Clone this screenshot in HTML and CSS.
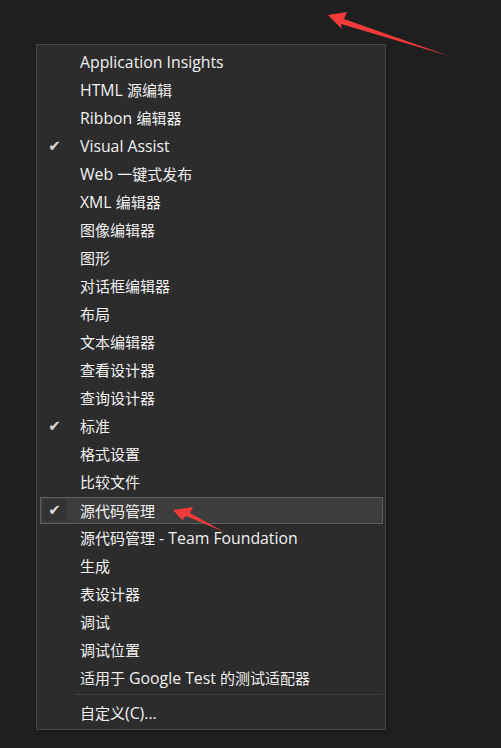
FILE: index.html
```html
<!DOCTYPE html>
<html lang="zh-CN">
<head>
<meta charset="utf-8">
<link rel="stylesheet" href="styles.css">
</head>
<body>
<div class="menu">
  <div class="item"><span class="label"><span class="en">Application Insights</span></span></div>
  <div class="item"><span class="label"><span class="en">HTML </span>源编辑</span></div>
  <div class="item"><span class="label"><span class="en">Ribbon </span>编辑器</span></div>
  <div class="item checked"><span class="check">✔</span><span class="label"><span class="en">Visual Assist</span></span></div>
  <div class="item"><span class="label"><span class="en">Web </span>一键式发布</span></div>
  <div class="item"><span class="label"><span class="en">XML </span>编辑器</span></div>
  <div class="item"><span class="label">图像编辑器</span></div>
  <div class="item"><span class="label">图形</span></div>
  <div class="item"><span class="label">对话框编辑器</span></div>
  <div class="item"><span class="label">布局</span></div>
  <div class="item"><span class="label">文本编辑器</span></div>
  <div class="item"><span class="label">查看设计器</span></div>
  <div class="item"><span class="label">查询设计器</span></div>
  <div class="item checked"><span class="check">✔</span><span class="label">标准</span></div>
  <div class="item"><span class="label">格式设置</span></div>
  <div class="item"><span class="label">比较文件</span></div>
  <div class="item checked hover"><span class="check">✔</span><span class="label">源代码管理</span></div>
  <div class="item"><span class="label">源代码管理<span class="en"> - Team Foundation</span></span></div>
  <div class="item"><span class="label">生成</span></div>
  <div class="item"><span class="label">表设计器</span></div>
  <div class="item"><span class="label">调试</span></div>
  <div class="item"><span class="label">调试位置</span></div>
  <div class="item"><span class="label">适用于<span class="en"> Google Test </span>的测试适配器</span></div>
  <div class="sep"></div>
  <div class="item"><span class="label">自定义<span class="en">(C)...</span></span></div>
</div>
<svg class="arrow arrow-top" width="501" height="748" viewBox="0 0 501 748">
  <polygon points="328,15 347,12 344,19 449,56 341,24 342,29" fill="#f23a3a"/>
</svg>
<svg class="arrow arrow-mid" width="501" height="748" viewBox="0 0 501 748">
  <polygon points="173,510 193,507 190,513 224,532 186,516 182,520" fill="#f23a3a"/>
</svg>
</body>
</html>
```
FILE: styles.css
```css
html, body {
  margin: 0;
  padding: 0;
  background: #1f1f1f;
  width: 501px;
  height: 748px;
  overflow: hidden;
}
body {
  position: relative;
  font-family: "Open Sans", "Noto Sans CJK SC", sans-serif;
  font-size: 15px;
  color: #f1f1f1;
}
.menu {
  margin: 44px 0 0 36px;
  width: 348px;
  background: #2c2c2c;
  border: 1px solid #454548;
  padding: 3px 0 2px 0;
  box-shadow: 2px 2px 4px rgba(0, 0, 0, 0.25);
}
.item {
  position: relative;
  height: 28px;
  display: flex;
  align-items: center;
  margin: 0 2px 0 3px;
  padding-left: 40px;
  box-sizing: border-box;
  border: 1px solid transparent;
  white-space: nowrap;
}
.item .label {
  margin-left: -1px;
  line-height: 28px;
}
.en {
  font-size: 15.8px;
}
.check {
  position: absolute;
  left: 2px;
  top: 2px;
  width: 23px;
  height: 22px;
  display: flex;
  align-items: center;
  justify-content: center;
  font-family: "DejaVu Sans", sans-serif;
  font-size: 15px;
  color: #dcdcdc;
}
.item.hover {
  background: #3d3d3d;
  border-color: #5e5e5e;
  height: 27px;
  margin-top: 1px;
}
.item.hover .label {
  line-height: 26px;
}
.item.hover .check {
  background: #333333;
  top: 1px;
}
.sep {
  height: 1px;
  margin: 2px 3px 4px 38px;
  background: #3f3f43;
}
.arrow {
  position: absolute;
  left: 0;
  top: 0;
  pointer-events: none;
}
```
